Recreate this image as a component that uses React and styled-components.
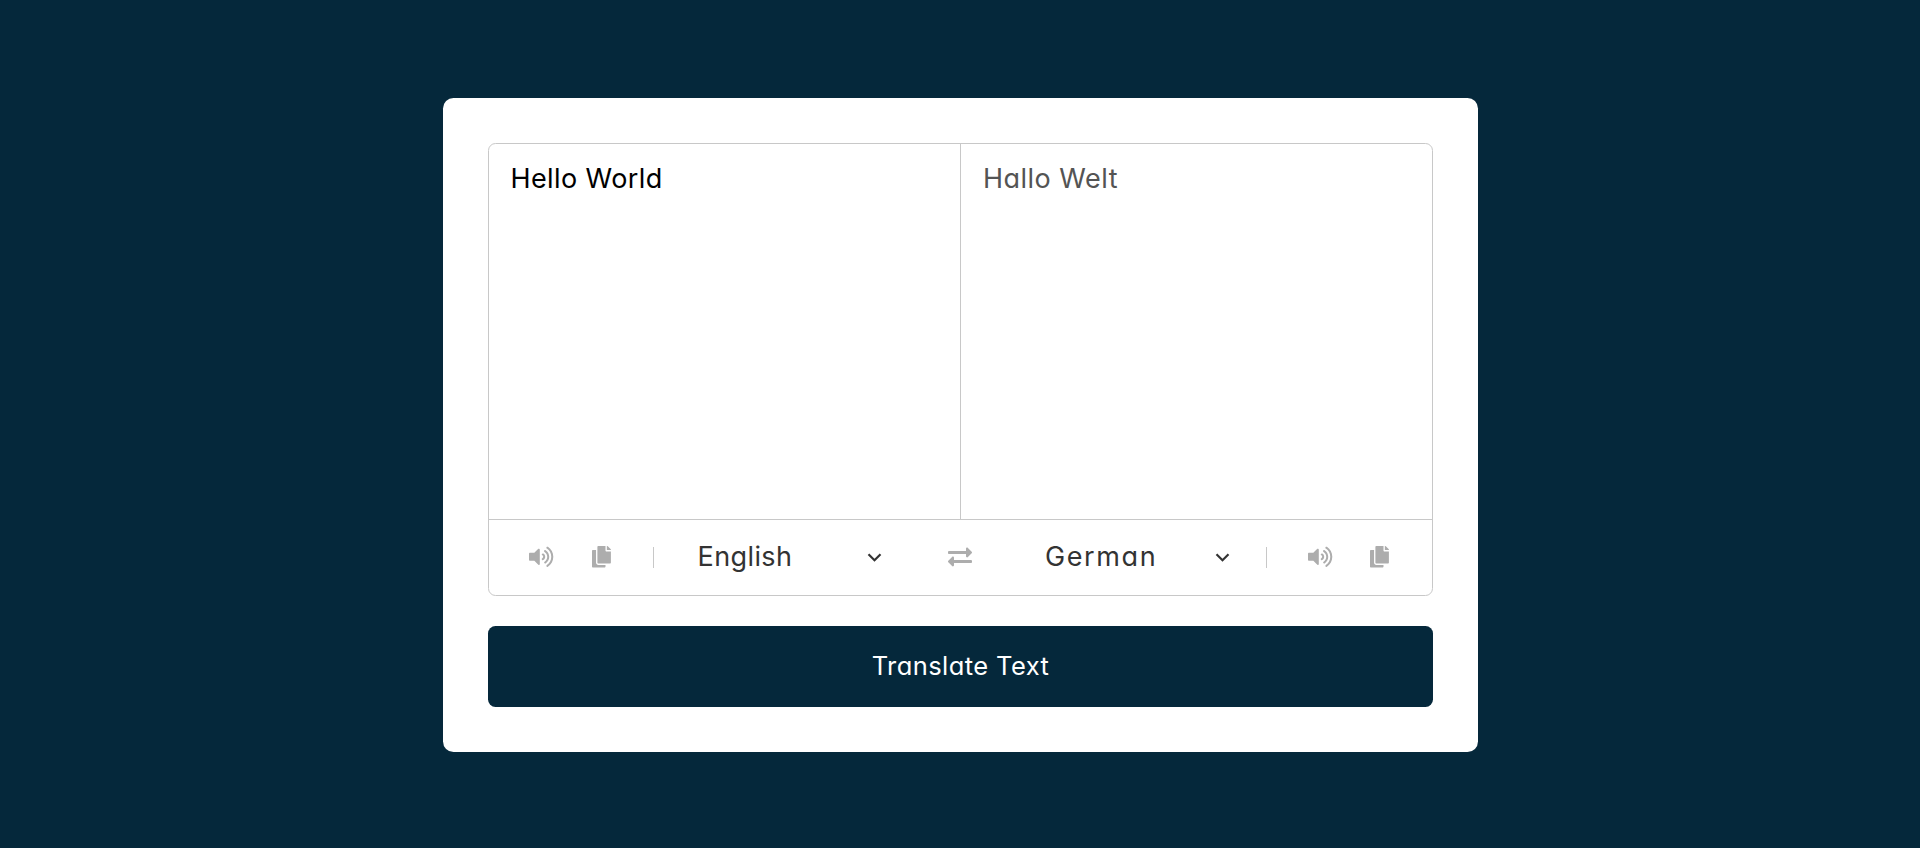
import React from "react";
import styled, { createGlobalStyle } from "styled-components";
import { FaVolumeUp, FaCopy, FaExchangeAlt } from "react-icons/fa";

const GlobalStyle = createGlobalStyle`
  *, *::before, *::after { box-sizing: border-box; }
  body {
    margin: 0;
    background: #05283b;
    font-family: Inter, "Liberation Sans", sans-serif;
    font-feature-settings: "cv11";
  }
`;

const Page = styled.main`
  display: flex;
  justify-content: center;
  align-items: flex-start;
  height: 848px;
  padding-top: 98px;
`;

const Card = styled.section`
  width: 1035px;
  height: 654px;
  margin-left: 1px;
  padding: 45px;
  border-radius: 10.5px;
  background: #fff;
`;

const Translator = styled.div`
  height: 453px;
  border: 1px solid #c8c8c8;
  border-radius: 7.5px;
`;

const Panels = styled.div`
  display: flex;
  height: 376px;
  border-bottom: 1px solid #c8c8c8;
`;

const TextPanel = styled.div`
  width: ${({ $output }) => ($output ? "471px" : "472px")};
  padding: 15px ${({ $output }) => ($output ? "22px" : "21.5px")};
  border-right: ${({ $output }) => ($output ? "none" : "1px solid #c8c8c8")};
  color: ${({ $output }) => ($output ? "#545454" : "#000")};
  font-size: 27px;
  font-weight: 400;
  line-height: 40px;
  letter-spacing: ${({ $output }) => ($output ? "0.48px" : "0.4px")};
`;

const Controls = styled.div`
  display: grid;
  grid-template-columns: 165px 294px 24px 294px 166px;
  align-items: center;
  height: 75px;
`;

const Actions = styled.div`
  display: flex;
  align-items: center;
  gap: 38.5px;
  height: 21px;
  padding-left: ${({ $end }) => ($end ? "40.5px" : "40px")};
  padding-bottom: 1px;
  color: #adadad;
  border: 0 solid #c8c8c8;
  border-width: ${({ $end }) => ($end ? "0 0 0 1px" : "0 1px 0 0")};

  svg { flex: none; overflow: visible; }
`;

const VolumeIcon = styled(FaVolumeUp)`
  width: 24.3px;
  height: 21.6px;
`;

const CopyIcon = styled(FaCopy)`
  width: 18.9px;
  height: 21.6px;
`;

const SwapIcon = styled(FaExchangeAlt)`
  display: block;
  width: 24px;
  height: 24px;
  margin-bottom: 1px;
  color: #adadad;
`;

const Language = styled.div`
  display: flex;
  align-items: center;
  justify-content: space-between;
  padding: ${({ $end }) => ($end ? "0 36px 0 73px" : "0 66px 0 43.5px")};
  color: #333;
`;

const LanguageName = styled.span`
  margin-top: -2px;
  font-size: 27px;
  font-weight: 400;
  line-height: 40px;
  letter-spacing: ${({ $spacing }) => $spacing};
`;

const ChevronSvg = styled.svg`
  display: block;
  width: 15px;
  height: 9px;
  fill: none;
  stroke: #333;
  stroke-width: 2.2;
`;

const Chevron = () => (
  <ChevronSvg viewBox="0 0 15 9">
    <path d="M1.5 1.2 7.5 7.2l6-6" />
  </ChevronSvg>
);

const TranslateButton = styled.button`
  display: block;
  width: 100%;
  height: 81px;
  margin-top: 30px;
  padding: 0 0 1px;
  border: 0;
  border-radius: 7.5px;
  background: #05283b;
  color: #fff;
  font: 400 25.5px/40px Inter, "Liberation Sans", sans-serif;
  font-feature-settings: "cv11";
  letter-spacing: 0.42px;
`;

export default function App() {
  return (
    <>
      <GlobalStyle />
      <Page>
        <Card>
          <Translator>
            <Panels>
              <TextPanel>Hello World</TextPanel>
              <TextPanel $output>Hallo Welt</TextPanel>
            </Panels>
            <Controls>
              <Actions>
                <VolumeIcon />
                <CopyIcon />
              </Actions>
              <Language>
                <LanguageName $spacing="0.4px">English</LanguageName>
                <Chevron />
              </Language>
              <SwapIcon />
              <Language $end>
                <LanguageName $spacing="1.6px">German</LanguageName>
                <Chevron />
              </Language>
              <Actions $end>
                <VolumeIcon />
                <CopyIcon />
              </Actions>
            </Controls>
          </Translator>
          <TranslateButton>Translate Text</TranslateButton>
        </Card>
      </Page>
    </>
  );
}
